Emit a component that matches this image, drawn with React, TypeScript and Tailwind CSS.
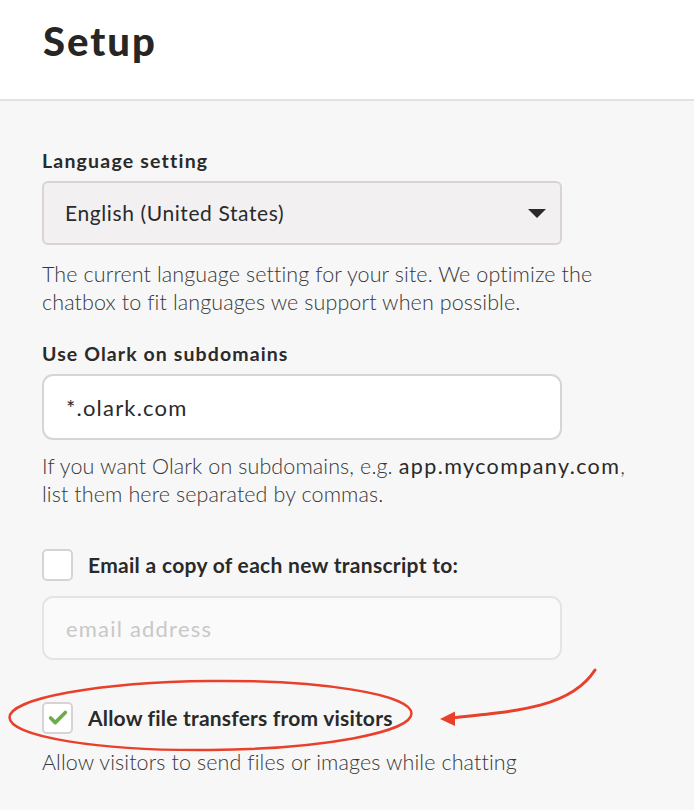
import { Check } from 'lucide-react';

function Checkbox({ checked }: { checked?: boolean }) {
  return (
    <div className="w-[31px] h-[32px] shrink-0 rounded-[5px] border-2 border-[#d8d3d3] bg-white flex items-center justify-center">
      {checked && <Check className="w-[22px] h-[22px] text-[#6aae4c]" strokeWidth={4} />}
    </div>
  );
}

export default function App() {
  return (
    <div className="w-[694px] h-[810px] overflow-hidden font-['Lato',sans-serif] text-[#2a2a2a]">
      <div className="h-[101px] bg-white border-b-2 border-[#e4e1e1] px-[43px] pt-[17px]">
        <h1 className="text-[40px] font-black leading-[48px] tracking-[2px] text-[#262626]">Setup</h1>
      </div>

      <div className="relative bg-[#f7f7f7] h-[709px] px-[42px] pt-[48px]">
        <div className="text-[19.5px] font-bold leading-[24px] tracking-[1.2px]">Language setting</div>
        <div className="mt-[8px] w-[520px] h-[64px] rounded-[6px] border-2 border-[#d9d3d3] bg-[#f2f0f1] flex items-center justify-between pl-[21px] pr-[14px]">
          <span className="text-[21px] tracking-[0.6px]">English (United States)</span>
          <svg width="18" height="9" viewBox="0 0 18 9">
            <path d="M0 0h18L9 9z" fill="#2a2a2a" />
          </svg>
        </div>
        <p className="mt-[15px] text-[21.5px] font-light leading-[28px] text-[#383838] tracking-[0.1px] whitespace-nowrap">
          The current language setting for your site. We optimize the<br />
          chatbox to fit languages we support when possible.
        </p>

        <div className="mt-[26px] text-[19.5px] font-bold leading-[24px] tracking-[1.1px]">Use Olark on subdomains</div>
        <div className="mt-[8px] w-[520px] h-[66px] rounded-[11px] border-2 border-[#d9d4d4] bg-white flex items-center pl-[22px]">
          <span className="text-[22px] tracking-[1.2px]">*.olark.com</span>
        </div>
        <p className="mt-[12px] text-[21.5px] font-light leading-[28px] text-[#383838] tracking-[0.1px] whitespace-nowrap">
          If you want Olark on subdomains, e.g. <span className="font-normal text-[#2a2a2a] tracking-[1.4px]">app.mycompany.com</span>,<br />
          list them here separated by commas.
        </p>

        <div className="mt-[41px] flex items-center gap-[15px] h-[32px]">
          <Checkbox />
          <span className="text-[21px] font-bold leading-[32px] tracking-[0.3px]">Email a copy of each new transcript to:</span>
        </div>
        <div className="mt-[15px] w-[520px] h-[64px] rounded-[11px] border-2 border-[#e7e3e3] bg-[#fafafa] flex items-center pl-[22px]">
          <span className="text-[22px] tracking-[1.2px] text-[#c8c8c8]">email address</span>
        </div>

        <div className="mt-[42px] flex items-center gap-[15px] h-[32px]">
          <Checkbox checked />
          <span className="text-[21px] font-bold leading-[32px] tracking-[0.2px]">Allow file transfers from visitors</span>
        </div>
        <p className="mt-[14px] text-[21.5px] font-light leading-[28px] text-[#383838] tracking-[0.1px]">
          Allow visitors to send files or images while chatting
        </p>

        <svg className="absolute left-0 top-0 pointer-events-none" width="694" height="709" viewBox="0 101 694 709">
          <ellipse cx="210.5" cy="715.5" rx="201" ry="34.5" fill="none" stroke="#e8402b" strokeWidth="2.5" transform="rotate(-0.6 210.5 715.5)" />
          <path d="M595 670 C 572 706, 522 711, 452 718" fill="none" stroke="#e8402b" strokeWidth="3" strokeLinecap="round" />
          <path d="M440 719 L455 711.5 L455 726 Z" fill="#e8402b" />
        </svg>
      </div>
    </div>
  );
}
